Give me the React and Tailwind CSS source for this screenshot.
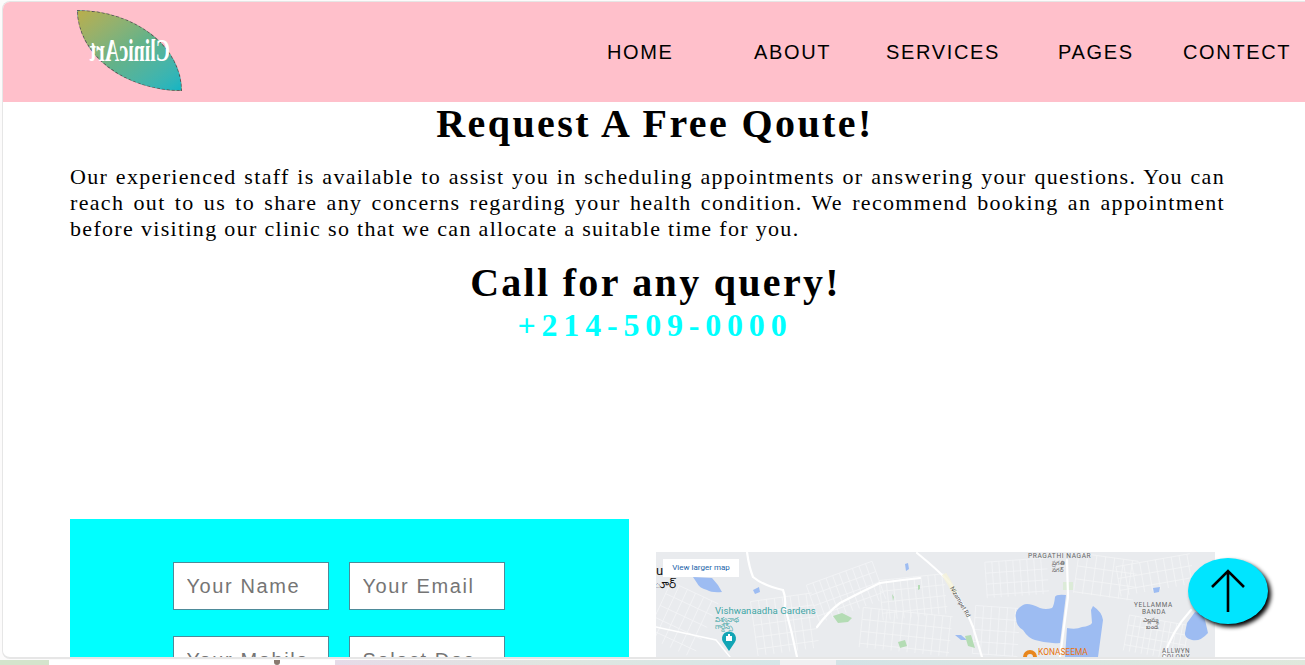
const navItems = [
  { label: "HOME", width: "w-[147px]" },
  { label: "ABOUT", width: "w-[132px]" },
  { label: "SERVICES", width: "w-[172px]" },
  { label: "PAGES", width: "w-[125px]" },
  { label: "CONTECT", width: "w-[122px]" },
];

const serif = "font-['Liberation_Serif','Times_New_Roman',serif]";
const sans = "font-['Liberation_Sans',Arial,sans-serif]";

const fieldClass =
  "w-[156px] h-[48px] shrink-0 bg-white border border-[#4d8b99] px-[13px] text-[20px] tracking-[1.6px] placeholder:text-[#757575] outline-none";

// neighbourhoods of small streets on the map: x, y, w, h, rotation, step
const blocks = [
  [0, 38, 52, 60, 25, 9],
  [98, 45, 62, 55, -8, 8],
  [155, 20, 70, 40, -20, 7],
  [205, 60, 90, 40, 6, 8],
  [225, 25, 65, 40, -6, 7],
  [330, 8, 62, 36, -4, 7],
  [318, 55, 45, 48, 4, 8],
  [420, 5, 60, 40, 8, 9],
  [470, 68, 60, 36, 10, 6],
  [462, 8, 75, 30, -10, 8],
];

const Block = ({ x, y, w, h, rot, step }) => {
  const lines = [];
  for (let i = 0; i <= w; i += step) lines.push(`M${x + i} ${y} V${y + h}`);
  for (let i = 0; i <= h; i += step + 4) lines.push(`M${x} ${y + i} H${x + w}`);
  return (
    <path
      d={lines.join(" ")}
      stroke="#f3f4f6"
      strokeWidth=".8"
      transform={`rotate(${rot} ${x + w / 2} ${y + h / 2})`}
    />
  );
};

const MapView = () => (
  <svg viewBox="0 0 559 105" className="block w-full h-full" fill="none">
    <rect width="559" height="105" fill="#e9ebee" />
    {blocks.map(([x, y, w, h, rot, step]) => (
      <Block key={`${x}-${y}`} x={x} y={y} w={w} h={h} rot={rot} step={step} />
    ))}
    {/* lakes */}
    <path d="M37 25 L56 26 Q62 32 66 40 Q56 41 51 38 Q43 36 41 31Z" fill="#9dbcf2" />
    <path d="M97 38 l6 -3 1 5 -5 2z M249 12 l3 -1 1 6 -3 2z M497 36 l7 -1 -1 5 -5 1z" fill="#9dbcf2" />
    <path d="M410 43 Q400 42 399 45 Q398 54 396 56 Q390 58 384 56 Q372 50 367 53 Q358 58 360 66 Q360 74 367 78 Q372 86 379 88 Q392 92 404 91Z" fill="#9dbcf2" />
    <path d="M437 54 Q446 60 447 68 L442 105 L409 105 L411 76 Q420 78 426 75 Q434 74 436 71 L435 58Z" fill="#9dbcf2" />
    <path d="M539 60 Q548 62 549 68 L552 81 Q544 90 536 88 Q528 86 529 81 L531 71Z" fill="#9dbcf2" />
    <path d="M299 83 l6 0 6 5 -6 0z" fill="#9dbcf2" />
    {/* green patches */}
    <path d="M177 64 l9 -3 10 5 -4 4 -10 1z M242 90 l7 -2 2 6 -7 2z M309 84 l6 -1 4 13 -7 -2z M262 33 l2 0 0 4 -2 1z M236 42 l2 3 -1 4z" fill="#b4dcb4" />
    <path d="M407 30 h10 v8 h-10z" fill="#dcebd8" />
    {/* main roads */}
    <g stroke="#fff" strokeWidth="2.2" strokeLinecap="round">
      <path d="M91 0 Q93 15 97 25 Q108 34 127 38 Q130 45 129 55 Q136 80 141 105" />
      <path d="M261 1 Q282 18 294 31 Q308 52 317 75 L326 105" />
      <path d="M411 8 L412 45 L404 105" />
      <path d="M535 58 Q515 80 508 105" />
      <path d="M161 75 Q172 60 184 51 Q205 40 224 31 Q245 28 264 26" />
      <path d="M0 75 L60 88 L74 105" strokeWidth="1.4" />
    </g>
    <path d="M288 22 L300 42" stroke="#f5f2da" strokeWidth="5" opacity=".8" />
    <g fontFamily="Roboto, 'Liberation Sans', sans-serif">
      <text x="0" y="23" fontSize="13" fill="#111">u</text>
      <text x="-2" y="36" fontSize="12" fill="#111">ూర్</text>
      <text x="59" y="62" fontSize="9.6" fill="#3fa6a6">Vishwanaadha Gardens</text>
      <text x="59" y="70" fontSize="7" fill="#3fa6a6">విశ్వనాథ</text>
      <text x="59" y="77" fontSize="7" fill="#3fa6a6">గార్డెన్స్</text>
      <text x="372" y="6" fontSize="6.6" letterSpacing=".6" fill="#666">PRAGATHI NAGAR</text>
      <text x="396" y="13" fontSize="6" fill="#555">ప్రగతి</text>
      <text x="396" y="20" fontSize="6" fill="#555">నగర్</text>
      <text x="478" y="55" fontSize="6.4" letterSpacing=".6" fill="#666">YELLAMMA</text>
      <text x="486" y="62" fontSize="6.4" letterSpacing=".6" fill="#666">BANDA</text>
      <text x="487" y="70" fontSize="6" fill="#555">ఎల్లమ్మ</text>
      <text x="490" y="77" fontSize="6" fill="#555">బండ</text>
      <text x="506" y="101" fontSize="6.4" letterSpacing=".6" fill="#666">ALLWYN</text>
      <text x="506" y="107" fontSize="6.4" letterSpacing=".6" fill="#666">COLONY</text>
      <text x="382" y="103" fontSize="8.4" fill="#e8710a">KONASEEMA</text>
      <text x="0" y="0" fontSize="6" fill="#555" transform="translate(294 36) rotate(60)">Nizampet Rd</text>
    </g>
    {/* pins */}
    <path d="M73 99 L67 90 A7 7 0 1 1 79 90Z" fill="#12a5b5" />
    <path d="M70 84 h6 v5 h-6z M72 82 h2 v2 h-2z" fill="#fff" />
    <path d="M367 105 a7 7 0 0 1 14 0 h-4 a3 3 0 0 0 -6 0z" fill="#e8871e" />
  </svg>
);

export default function App() {
  return (
    <div className={`${sans} relative h-[665px] w-full overflow-hidden bg-[#fcfbfb] flex flex-col text-black`}>
      <div className="mt-[1px] ml-[2px] h-[658px] shrink-0 bg-white rounded-l-[8px] overflow-hidden border-t border-l border-b-2 border-[#e6e6e6]">
        <header className="h-[100px] bg-[#ffc0cb] flex items-center">
          <div className="ml-[74px] mt-[-3px] w-[105px] h-[81px] rounded-[0_100%_0_100%] border border-dashed border-[#555] bg-gradient-to-br from-[#b9ae4b] via-[#64b288] to-[#0fb5c4] flex items-center justify-center">
            <span className={`${serif} [transform:scale(-0.64,1)] font-bold text-white text-[31px] leading-none whitespace-nowrap`}>ClinicArt</span>
          </div>
          <nav className="ml-auto flex items-center">
            {navItems.map((item) => (
              <a key={item.label} className={`${item.width} shrink-0 text-[20px] tracking-[1.65px] whitespace-nowrap`}>
                {item.label}
              </a>
            ))}
          </nav>
        </header>

        <main>
          <div className={`${serif} text-center`}>
            <h1 className="pl-[2px] font-bold text-[40px] leading-[44px] tracking-[2.4px]">Request A Free Qoute!</h1>
            <p className="mt-[18px] ml-[67px] mr-[80px] text-[22px] leading-[26px] tracking-[1.32px] text-justify">
              Our experienced staff is available to assist you in scheduling appointments or answering your questions. You can reach out to us to share any concerns regarding your health condition. We recommend booking an appointment before visiting our clinic so that we can allocate a suitable time for you.
            </p>
            <h2 className="mt-[18px] pl-[3px] font-bold text-[40px] leading-[46px] tracking-[2.3px]">Call for any query!</h2>
            <h3 className="pl-[2px] font-bold text-[32px] leading-[38px] tracking-[5.8px] text-[#00ffff]">+214-509-0000</h3>
          </div>

          <div className="mt-[175px] pl-[67px] flex items-start gap-[27px]">
            <form className="w-[559px] h-[200px] shrink-0 bg-[#00ffff] pt-[43px] pr-[22px] flex flex-col items-center gap-[26px]">
              <div className="flex gap-[20px]">
                <input className={fieldClass} placeholder="Your Name" />
                <input className={fieldClass} placeholder="Your Email" />
              </div>
              <div className="flex gap-[20px]">
                <input className={fieldClass} placeholder="Your Mobile" />
                <input className={fieldClass} placeholder="Select Doc" />
              </div>
            </form>
            <div className="relative w-[559px] h-[105px] mt-[33px] shrink-0 overflow-hidden">
              <MapView />
              <div className="absolute left-[7px] top-[7px] w-[76px] h-[18px] bg-white flex items-center justify-center text-[8px] text-[#1a5fa8] font-['Roboto',sans-serif]">
                View larger map
              </div>
            </div>
          </div>
        </main>
      </div>

      {/* strip of the next window behind */}
      <div className="mt-[1px] flex-1 flex">
        <div className="w-[49px] bg-[#d4e4cc]" />
        <div className="w-[286px] bg-white pl-[225px]">
          <div className="w-[6px] h-[5px] bg-[#8a7a70] rounded-b-sm" />
        </div>
        <div className="w-[445px] bg-gradient-to-r from-[#e6dbe8] via-[#dfe6e0] to-[#d5e6e8]" />
        <div className="w-[56px] bg-[#f0f0f2]" />
        <div className="flex-1 bg-gradient-to-r from-[#d3e3e6] to-[#dfe8dc]" />
      </div>

      <button className="absolute left-[1188px] top-[558px] w-[80px] h-[66px] rounded-[50%] bg-[#00e5ff] shadow-[3px_3px_4px_#000] flex items-center justify-center">
        <svg width="34" height="44" viewBox="0 0 34 44" fill="none" stroke="#000" strokeWidth="2.6">
          <path d="M17 43 V2 M1 18 L17 2 L33 18" />
        </svg>
      </button>
    </div>
  );
}
